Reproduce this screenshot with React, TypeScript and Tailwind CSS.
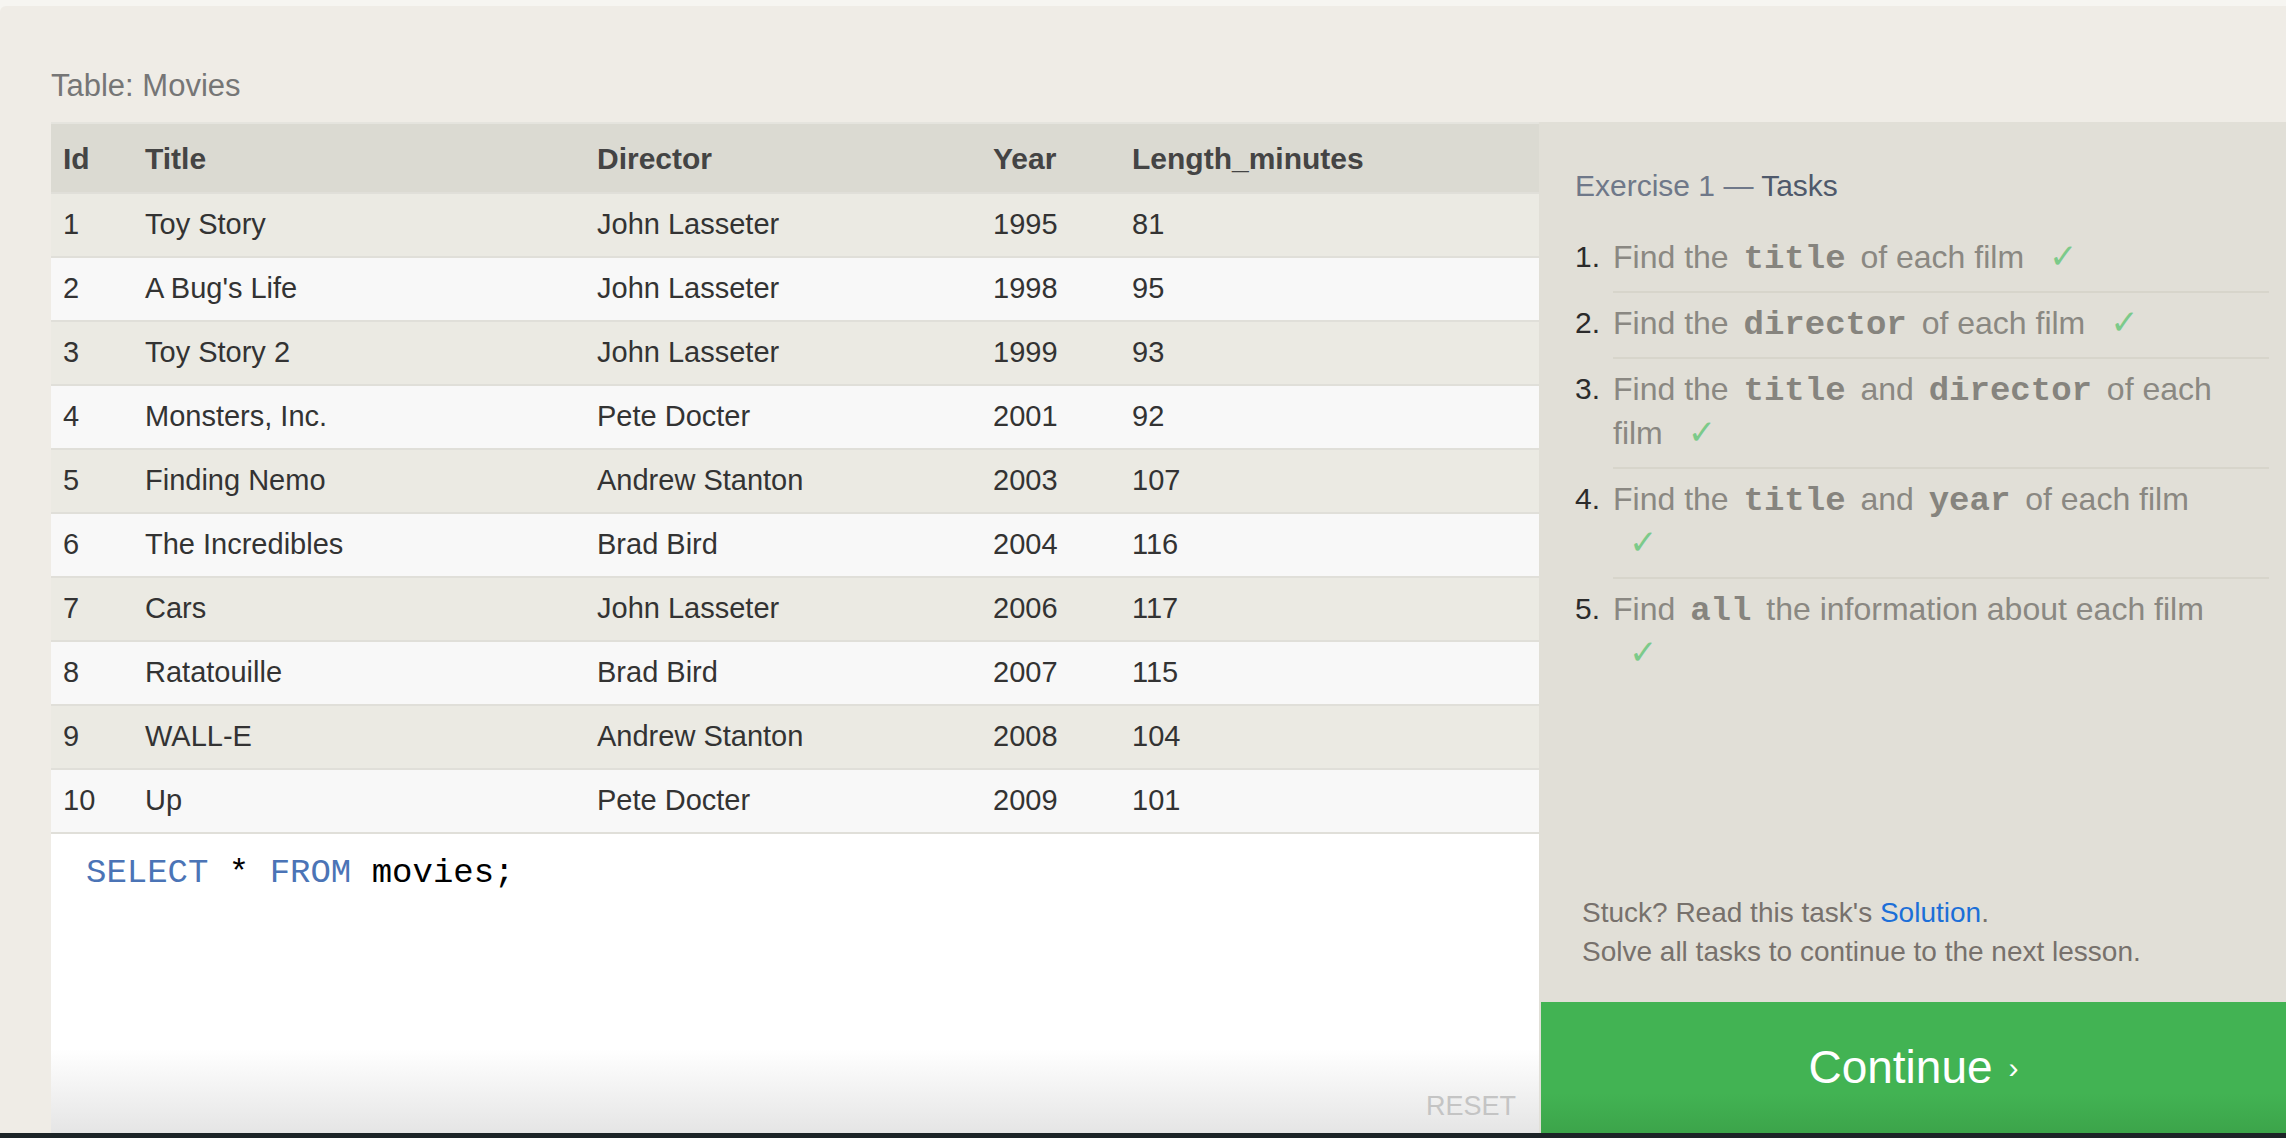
import React from 'react';

type Movie = {
  id: number;
  title: string;
  director: string;
  year: number;
  length: number;
};

const MOVIES: Movie[] = [
  { id: 1, title: 'Toy Story', director: 'John Lasseter', year: 1995, length: 81 },
  { id: 2, title: "A Bug's Life", director: 'John Lasseter', year: 1998, length: 95 },
  { id: 3, title: 'Toy Story 2', director: 'John Lasseter', year: 1999, length: 93 },
  { id: 4, title: 'Monsters, Inc.', director: 'Pete Docter', year: 2001, length: 92 },
  { id: 5, title: 'Finding Nemo', director: 'Andrew Stanton', year: 2003, length: 107 },
  { id: 6, title: 'The Incredibles', director: 'Brad Bird', year: 2004, length: 116 },
  { id: 7, title: 'Cars', director: 'John Lasseter', year: 2006, length: 117 },
  { id: 8, title: 'Ratatouille', director: 'Brad Bird', year: 2007, length: 115 },
  { id: 9, title: 'WALL-E', director: 'Andrew Stanton', year: 2008, length: 104 },
  { id: 10, title: 'Up', director: 'Pete Docter', year: 2009, length: 101 },
];

const COLS = 'grid grid-cols-[82px_452px_396px_139px_1fr]';

function Code({ children }: { children: React.ReactNode }) {
  return (
    <code className="px-[6px] font-['Liberation_Mono','Courier_New',monospace] text-[34px] leading-[34px] font-bold text-[#86847e]">
      {children}
    </code>
  );
}

function Check() {
  return (
    <span className="inline-block ml-[16px] font-['DejaVu_Sans',sans-serif] text-[34px] leading-[34px] text-[#7cca8a]">
      ✓
    </span>
  );
}

const TASKS: React.ReactNode[] = [
  <>Find the <Code>title</Code> of each film</>,
  <>Find the <Code>director</Code> of each film</>,
  <>Find the <Code>title</Code> and <Code>director</Code> of each film</>,
  <>Find the <Code>title</Code> and <Code>year</Code> of each film</>,
  <>Find <Code>all</Code> the information about each film</>,
];

export default function App() {
  return (
    <div className="w-[2286px] h-[1138px] flex flex-col overflow-hidden bg-[#f6f5f1] font-['Liberation_Sans',Arial,sans-serif]">
      <div className="h-[6px]" />
      <div className="flex-1 min-h-0 flex flex-col bg-[#efece6] rounded-tl-[6px] pl-[51px]">
        <h1 className="pt-[62px] mb-[18px] text-[31px] leading-[36px] text-[#767676]">
          Table: Movies
        </h1>

        <div className="flex flex-1 min-h-0">
          {/* table + query editor */}
          <div className="w-[1488px] flex flex-col">
            <div
              className={`${COLS} h-[72px] items-center bg-[#dbdad2] border-t-2 border-b-2 border-t-[#e5e4de] border-b-[#e0dfd9] text-[30px] font-bold text-[#444]`}
            >
              <div className="pl-3">Id</div>
              <div className="pl-3">Title</div>
              <div className="pl-3">Director</div>
              <div className="pl-3">Year</div>
              <div className="pl-3">Length_minutes</div>
            </div>
            {MOVIES.map((m, i) => (
              <div
                key={m.id}
                className={`${COLS} h-[64px] items-center border-b-2 border-[#e0dfd9] text-[29px] text-[#333] ${
                  i % 2 === 0 ? 'bg-[#ebeae3]' : 'bg-[#f8f8f8]'
                }`}
              >
                <div className="pl-3">{m.id}</div>
                <div className="pl-3">{m.title}</div>
                <div className="pl-3">{m.director}</div>
                <div className="pl-3">{m.year}</div>
                <div className="pl-3">{m.length}</div>
              </div>
            ))}

            <div className="flex-1 flex flex-col bg-[linear-gradient(to_bottom,#ffffff_72%,#e5e5e5)]">
              <pre className="pt-[19px] pl-[35px] font-['Liberation_Mono','Courier_New',monospace] text-[34px] leading-[40px] text-black">
                <span className="text-[#4b74b6]">SELECT</span> * <span className="text-[#4b74b6]">FROM</span> movies;
              </pre>
              <div className="flex-1" />
              <div className="self-end pr-[23px] pb-[12px] text-[27px] leading-[30px] text-[#c4c4c4]">
                RESET
              </div>
            </div>
          </div>

          {/* exercise panel */}
          <aside className="flex-1 flex flex-col bg-[#e1dfd7]">
            <h2 className="pt-[46px] pl-[36px] text-[30px] leading-[36px] text-[#6f7889]">
              Exercise 1 — <span className="text-[#4f596b]">Tasks</span>
            </h2>
            <ol className="mt-[23px] pl-[36px] pr-[17px]">
              {TASKS.map((t, i) => (
                <li key={i} className="flex text-[32px] leading-[44px]">
                  <span className="w-[38px] shrink-0 pt-[8px] text-[30px] text-[#2b2b2b]">{i + 1}.</span>
                  <div
                    className={`flex-1 pt-[8px] pb-[12px] pr-[40px] text-[#8a8882] ${
                      i < TASKS.length - 1 ? 'border-b-2 border-[#d7d5cb]' : ''
                    }`}
                  >
                    {t} <Check />
                  </div>
                </li>
              ))}
            </ol>

            <div className="flex-1" />

            <div className="pl-[43px] mb-[31px] text-[28px] leading-[39px] text-[#77716c]">
              <p>
                Stuck? Read this task's <a className="text-[#1c6fd8]">Solution</a>.
              </p>
              <p>Solve all tasks to continue to the next lesson.</p>
            </div>

            <button
              type="button"
              className="h-[131px] ml-[2px] flex items-center justify-center bg-[linear-gradient(to_bottom,#42b353_70%,#3ca44a)] text-white text-[46px]"
            >
              Continue
              <span className="ml-[16px] text-[30px]">›</span>
            </button>
          </aside>
        </div>
      </div>
      <div className="h-[5px] bg-[#1c2427]" />
    </div>
  );
}
